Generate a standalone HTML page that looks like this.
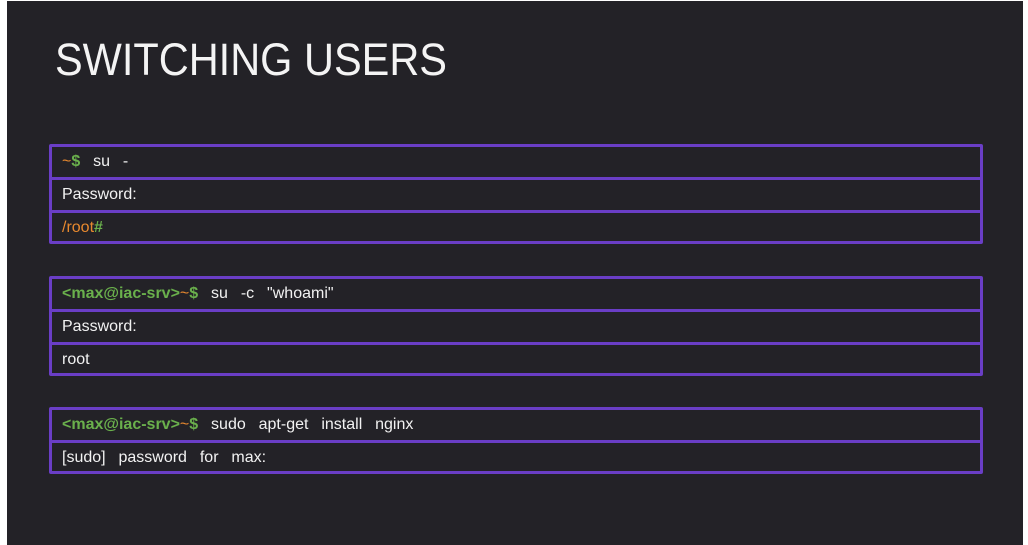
<!DOCTYPE html>
<html><head><meta charset="utf-8"><style>
*{margin:0;padding:0;box-sizing:border-box}
html,body{width:1028px;height:545px;overflow:hidden;background:#fff}
.slide{position:absolute;left:7px;top:1px;width:1016px;height:544px;background:#232227}
.box{position:absolute;left:49px;width:934px;border:3px solid #6a3ec6;border-radius:2px}
.row{height:33px;border-top:3px solid #6a3ec6;color:#f2f2f2;font:16px "Liberation Sans",sans-serif;padding-left:10px;line-height:30px;white-space:pre;word-spacing:2px}
.row:first-child{border-top:none;height:30px;line-height:29px}
.g{color:#6ab04c;font-weight:bold;word-spacing:0}
.o{color:#e8892e}
</style></head><body>
<div class="slide"></div>
<svg style="position:absolute;left:0;top:0" width="1028" height="100"><text x="55" y="75" font-family="Liberation Sans, sans-serif" font-size="45" fill="#f4f4f4" textLength="392" lengthAdjust="spacingAndGlyphs">SWITCHING USERS</text></svg>
<div class="box" style="top:144px;height:100px">
<div class="row"><span class="o">~</span><span class="g">$</span>  su  -</div>
<div class="row">Password:</div>
<div class="row"><span class="o">/root</span><span class="g">#</span></div>
</div>
<div class="box" style="top:276px;height:100px">
<div class="row"><span class="g">&lt;max@iac-srv&gt;</span><span class="o">~</span><span class="g">$</span>  su  -c  "whoami"</div>
<div class="row">Password:</div>
<div class="row">root</div>
</div>
<div class="box" style="top:407px;height:67px">
<div class="row"><span class="g">&lt;max@iac-srv&gt;</span><span class="o">~</span><span class="g">$</span>  sudo  apt-get  install  nginx</div>
<div class="row">[sudo]  password  for  max:</div>
</div>
</body></html>
